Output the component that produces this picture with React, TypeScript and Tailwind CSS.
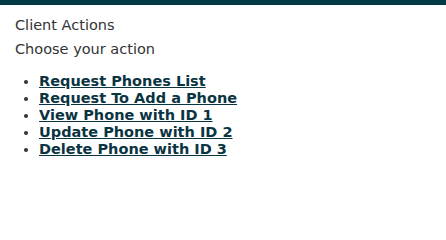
import React from 'react';

const actions = [
    'Request Phones List',
    'Request To Add a Phone',
    'View Phone with ID 1',
    'Update Phone with ID 2',
    'Delete Phone with ID 3',
];

export default function App() {
    return (
        <div className="min-h-screen bg-white text-[#333333]" style={{ fontFamily: '"DejaVu Sans", Verdana, sans-serif' }}>
            <div className="h-[5px] bg-[#023a46]" />
            <div className="px-[15px] pt-[12px]">
                <div className="text-[14.5px] leading-[17px]">Client Actions</div>
                <div className="mt-[7px] text-[14.5px] leading-[17px]">Choose your action</div>
                <ul className="mt-[15px] list-disc pl-[24px] text-[14.5px] leading-[17px]">
                    {actions.map((a) => (
                        <li key={a}>
                            <a href="#" className="font-bold text-[#0b3442] underline">
                                {a}
                            </a>
                        </li>
                    ))}
                </ul>
            </div>
        </div>
    );
}
